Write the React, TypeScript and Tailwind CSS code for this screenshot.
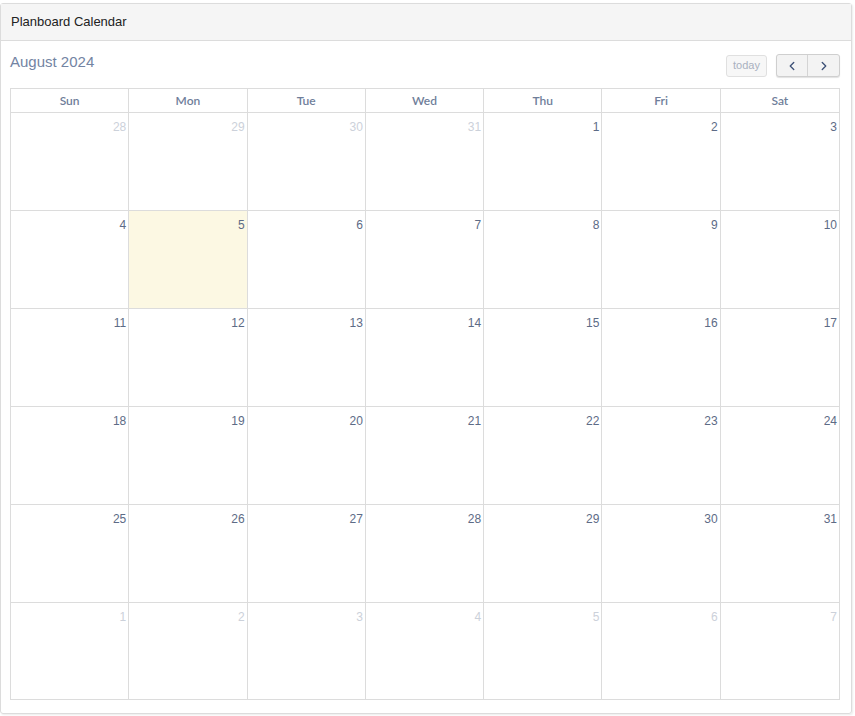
import { ChevronLeft, ChevronRight } from "lucide-react";

const DAYS = ["Sun", "Mon", "Tue", "Wed", "Thu", "Fri", "Sat"];

// August 2024 starts on a Thursday; pad with July / September days.
function buildWeeks() {
  const cells: { day: number; current: boolean }[] = [];
  [28, 29, 30, 31].forEach((d) => cells.push({ day: d, current: false }));
  for (let d = 1; d <= 31; d++) cells.push({ day: d, current: true });
  for (let d = 1; cells.length < 42; d++) cells.push({ day: d, current: false });
  const weeks = [];
  for (let i = 0; i < 6; i++) weeks.push(cells.slice(i * 7, i * 7 + 7));
  return weeks;
}

export default function App() {
  const weeks = buildWeeks();

  return (
    <div className="w-[855px] h-[716px] bg-white pt-[3px] font-['Liberation_Sans',Arial,sans-serif]">
      <div className="w-[852px] h-[711px] border border-[#dcdcdc] rounded-[3px] shadow-[1px_1px_2px_rgba(0,0,0,0.08)] flex flex-col">
        <div className="h-[37px] shrink-0 bg-[#f5f5f5] border-b border-[#dcdcdc] flex items-center px-[10px] text-[13px] text-[#222]">
          Planboard Calendar
        </div>

        <div className="flex-1 pl-[9px] pr-[11px] pt-[13px]">
          <div className="flex items-start justify-between h-[34px]">
            <h2 className="text-[15px] leading-[20px] text-[#7384a3] mt-[-2px]">August 2024</h2>
            <div className="flex items-center gap-[9px]">
              <button
                type="button"
                className="h-[22px] w-[41px] rounded-[3px] border border-[#e0e0e0] bg-[#f7f7f7] text-[11px] text-[#a9b1c0] flex items-center justify-center"
              >
                today
              </button>
              <div className="flex h-[23px] rounded-[3px] border border-[#cfcfcf] bg-[#f3f3f3] shadow-[0_1px_1px_rgba(0,0,0,0.12)] overflow-hidden">
                <button type="button" className="w-[31px] flex items-center justify-center text-[#42557a] border-r border-[#d4d4d4]">
                  <ChevronLeft className="h-[14px] w-[14px]" strokeWidth={2.4} />
                </button>
                <button type="button" className="w-[31px] flex items-center justify-center text-[#42557a]">
                  <ChevronRight className="h-[14px] w-[14px]" strokeWidth={2.4} />
                </button>
              </div>
            </div>
          </div>

          <div className="w-[830px] border border-[#dcdcdc]">
            <div className="grid grid-cols-7 h-[24px] border-b border-[#dcdcdc]">
              {DAYS.map((d, i) => (
                <div
                  key={d}
                  className={`flex items-center justify-center text-[12px] font-semibold text-[#6f7e9a] font-['Lato',sans-serif] ${i < 6 ? "border-r border-[#dcdcdc]" : ""}`}
                >
                  {d}
                </div>
              ))}
            </div>
            {weeks.map((week, wi) => (
              <div
                key={wi}
                className={`grid grid-cols-7 ${wi < 5 ? "h-[98px] border-b border-[#dcdcdc]" : "h-[96px]"}`}
              >
                {week.map((c, ci) => {
                  const today = c.current && c.day === 5;
                  return (
                    <div
                      key={ci}
                      className={`flex justify-end pr-[2px] pt-[8px] text-[12px] leading-[13px] ${ci < 6 ? "border-r border-[#dcdcdc]" : ""} ${today ? "bg-[#fcf8e3]" : ""} ${c.current ? "text-[#5d6b86]" : "text-[#ccd1da]"}`}
                    >
                      {c.day}
                    </div>
                  );
                })}
              </div>
            ))}
          </div>
        </div>
      </div>
    </div>
  );
}
